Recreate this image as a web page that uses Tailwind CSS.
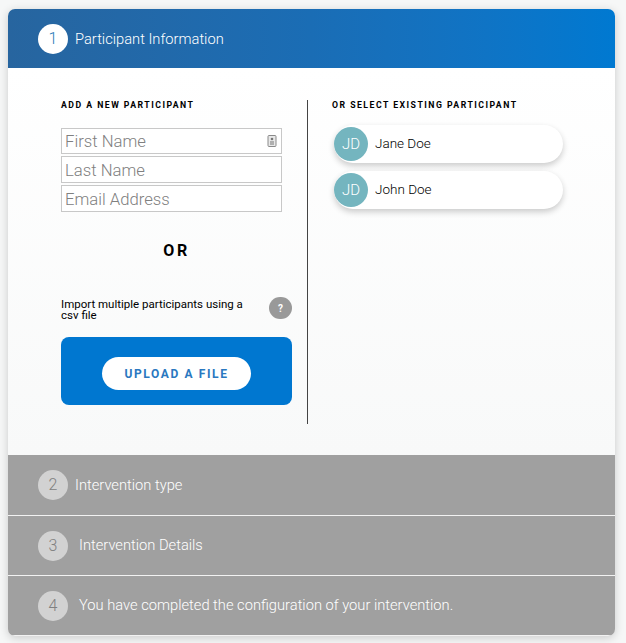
<!DOCTYPE html>
<html lang="en">
<head>
    <meta charset="UTF-8">
    <title>Participant Information</title>
    <script src="https://cdn.jsdelivr.net/npm/@tailwindcss/browser@4"></script>
</head>
<body class="bg-[#f6f7f7] font-['Roboto',sans-serif] w-[626px] h-[643px] overflow-hidden">
    <div class="pt-[9px] pl-2 w-[615px]">
        <div class="rounded-[7px] overflow-hidden shadow-[0_2px_10px_rgba(0,0,0,0.18)] w-[607px]">
            <!-- Step 1 header -->
            <div class="h-[59px] flex items-center pl-[30px] bg-gradient-to-r from-[#27659f] via-[#1a6db5] to-[#0079d1]">
                <div class="w-[30px] h-[30px] rounded-full bg-white text-[#2a7ab8] flex items-center justify-center text-[16px] font-light">1</div>
                <div class="ml-[7px] mt-[2px] text-[14.7px] font-light text-white">Participant Information</div>
            </div>

            <!-- Step 1 body -->
            <div class="h-[387px] bg-gradient-to-b from-white to-[#f8f9f9] flex pt-8">
                <div class="ml-[53px] w-[231px]">
                    <h2 class="text-[8.7px] leading-[10px] font-bold tracking-[0.17em] text-black">ADD A NEW PARTICIPANT</h2>
                    <div class="mt-[18px] w-[221px] flex flex-col gap-[2px]">
                        <div class="h-[26px] border border-[#c8c8c8] bg-white flex items-center justify-between pl-[3px] pr-[4px]">
                            <span class="pt-[2px] text-[16.7px] font-light text-[#808080]">First Name</span>
                            <svg class="w-[10px] h-[12px]" viewBox="0 0 10 12" fill="none">
                                <rect x="1" y="0.5" width="8" height="11" rx="1" fill="#e8e8e8" stroke="#8a8a8a"/>
                                <circle cx="5" cy="4" r="1.3" fill="#777"/>
                                <rect x="3" y="6.5" width="4" height="1" fill="#777"/>
                                <rect x="3" y="8.5" width="4" height="1" fill="#777"/>
                            </svg>
                        </div>
                        <div class="h-[27px] border border-[#c8c8c8] bg-white flex items-center pl-[3px]">
                            <span class="pt-[2px] text-[16.7px] font-light text-[#808080]">Last Name</span>
                        </div>
                        <div class="h-[27px] border border-[#c8c8c8] bg-white flex items-center pl-[3px]">
                            <span class="pt-[2px] text-[16.7px] font-light text-[#808080]">Email Address</span>
                        </div>
                    </div>
                    <div class="mt-[29px] text-center text-[16px] leading-[19px] font-bold tracking-[0.16em] text-black">OR</div>
                    <div class="mt-[37px] h-[22px] flex items-start justify-between">
                        <p class="w-[190px] pt-[2px] text-[11.5px] leading-[11px] text-black">Import multiple participants using a csv file</p>
                        <div class="w-[23px] h-[22px] rounded-full bg-[#999999] text-white flex items-center justify-center text-[10px] font-bold">?</div>
                    </div>
                    <div class="mt-[18px] h-[68px] rounded-[8px] bg-[#0077d0] flex items-start justify-center pt-5">
                        <div class="w-[149px] h-[33px] rounded-full bg-white flex items-center justify-center text-[12px] font-bold tracking-[0.135em] text-[#2a78c0]">UPLOAD A FILE</div>
                    </div>
                </div>

                <div class="w-px h-[324px] bg-[#444444] ml-[15px]"></div>

                <div class="ml-6">
                    <h2 class="text-[8.7px] leading-[10px] font-bold tracking-[0.17em] text-black">OR SELECT EXISTING PARTICIPANT</h2>
                    <div class="mt-[15px] ml-[2px] flex flex-col gap-2">
                        <div class="w-[229px] h-[38px] rounded-full bg-white shadow-[0_3px_6px_rgba(0,0,0,0.2)] flex items-center">
                            <div class="w-[34px] h-[34px] rounded-full bg-[#74b5bf] text-white font-light text-[15px] flex items-center justify-center">JD</div>
                            <span class="ml-[7px] pb-[2px] text-[13.5px] font-light text-black">Jane Doe</span>
                        </div>
                        <div class="w-[229px] h-[38px] rounded-full bg-white shadow-[0_3px_6px_rgba(0,0,0,0.2)] flex items-center">
                            <div class="w-[34px] h-[34px] rounded-full bg-[#74b5bf] text-white font-light text-[15px] flex items-center justify-center">JD</div>
                            <span class="ml-[7px] pb-[2px] text-[13.5px] font-light text-black">John Doe</span>
                        </div>
                    </div>
                </div>
            </div>

            <!-- Remaining steps -->
            <div class="h-[61px] bg-[#a0a0a0] border-b border-[#f2f2f2] flex items-center pl-[30px]">
                <div class="w-[30px] h-[30px] rounded-full bg-[#d2d2d2] text-[#808080] flex items-center justify-center text-[16px] font-light">2</div>
                <div class="ml-[7px] text-[14.7px] font-light text-white">Intervention type</div>
            </div>
            <div class="h-[60px] bg-[#a0a0a0] border-b border-[#f2f2f2] flex items-center pl-[30px]">
                <div class="w-[30px] h-[30px] rounded-full bg-[#d2d2d2] text-[#808080] flex items-center justify-center text-[16px] font-light">3</div>
                <div class="ml-[11px] text-[14.7px] font-light text-white">Intervention Details</div>
            </div>
            <div class="h-[60px] bg-[#a0a0a0] border-b border-[#f2f2f2] flex items-center pl-[30px]">
                <div class="w-[30px] h-[30px] rounded-full bg-[#d2d2d2] text-[#808080] flex items-center justify-center text-[16px] font-light">4</div>
                <div class="ml-[11px] text-[14.7px] font-light text-white">You have completed the configuration of your intervention.</div>
            </div>
        </div>
    </div>
</body>
</html>
